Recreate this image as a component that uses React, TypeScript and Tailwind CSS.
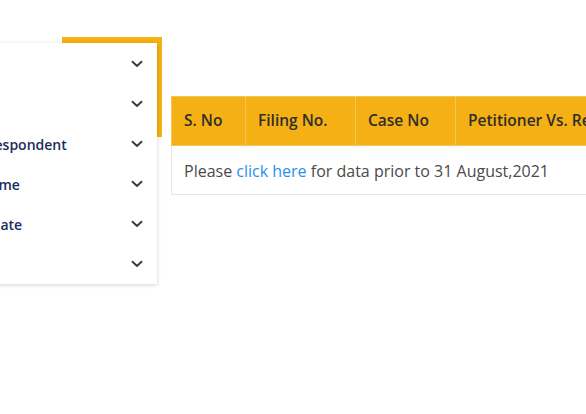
const filters = ["Filing No.", "Case No", "Petitioner/Respondent", "Advocate Name", "Judgement Date", "Status"];

const Chevron = () => (
  <svg width="12" height="8" viewBox="0 0 12 8" fill="none" className="shrink-0">
    <path d="M1.5 1.8 6 6 10.5 1.8" stroke="#3a3f4a" strokeWidth="2" strokeLinecap="round" strokeLinejoin="round" />
  </svg>
);

export default function App() {
  return (
    <div className="w-[586px] h-[414px] bg-white overflow-hidden flex items-start font-['Open_Sans',sans-serif]">
      {/* filter sidebar, partly scrolled out of view */}
      <div className="relative ml-[-100px] mt-[43px] shrink-0">
        <div className="absolute left-[162px] top-[-6px] w-[100px] h-[100px] bg-[#f5b013]" />
        <div className="relative w-[257px] bg-white shadow-[0_1px_4px_rgba(0,0,0,0.18)] pt-[1px]">
          {filters.map((f) => (
            <div key={f} className="h-10 flex items-center justify-between pl-[13px] pr-[14px]">
              <span className="text-[14px] font-semibold text-[#1c2d5a] whitespace-nowrap">{f}</span>
              <Chevron />
            </div>
          ))}
        </div>
      </div>

      {/* results table */}
      <div className="ml-[14px] mt-[96px] w-[600px] shrink-0">
        <table className="w-full border-collapse">
          <thead>
            <tr className="bg-[#f5b013] text-[#2e2e2e] h-[49px] text-[15.5px]">
              <th className="w-[74px] text-left font-semibold px-[12px] border border-[#f3c65a]">S. No</th>
              <th className="w-[110px] text-left font-semibold px-[12px] border border-[#f3c65a]">Filing No.</th>
              <th className="w-[100px] text-left font-semibold px-[12px] border border-[#f3c65a]">Case No</th>
              <th className="text-left font-semibold px-[12px] border border-[#f3c65a] whitespace-nowrap">Petitioner Vs. Respondent</th>
            </tr>
          </thead>
          <tbody>
            <tr className="h-[49px]">
              <td colSpan={4} className="px-[12px] pt-[2px] text-[16px] text-[#4a4a4a] border border-[#e6e6e6]">
                Please <span className="text-[#2a8ff0]">click here</span> for data prior to 31 August,2021
              </td>
            </tr>
          </tbody>
        </table>
      </div>
    </div>
  );
}
